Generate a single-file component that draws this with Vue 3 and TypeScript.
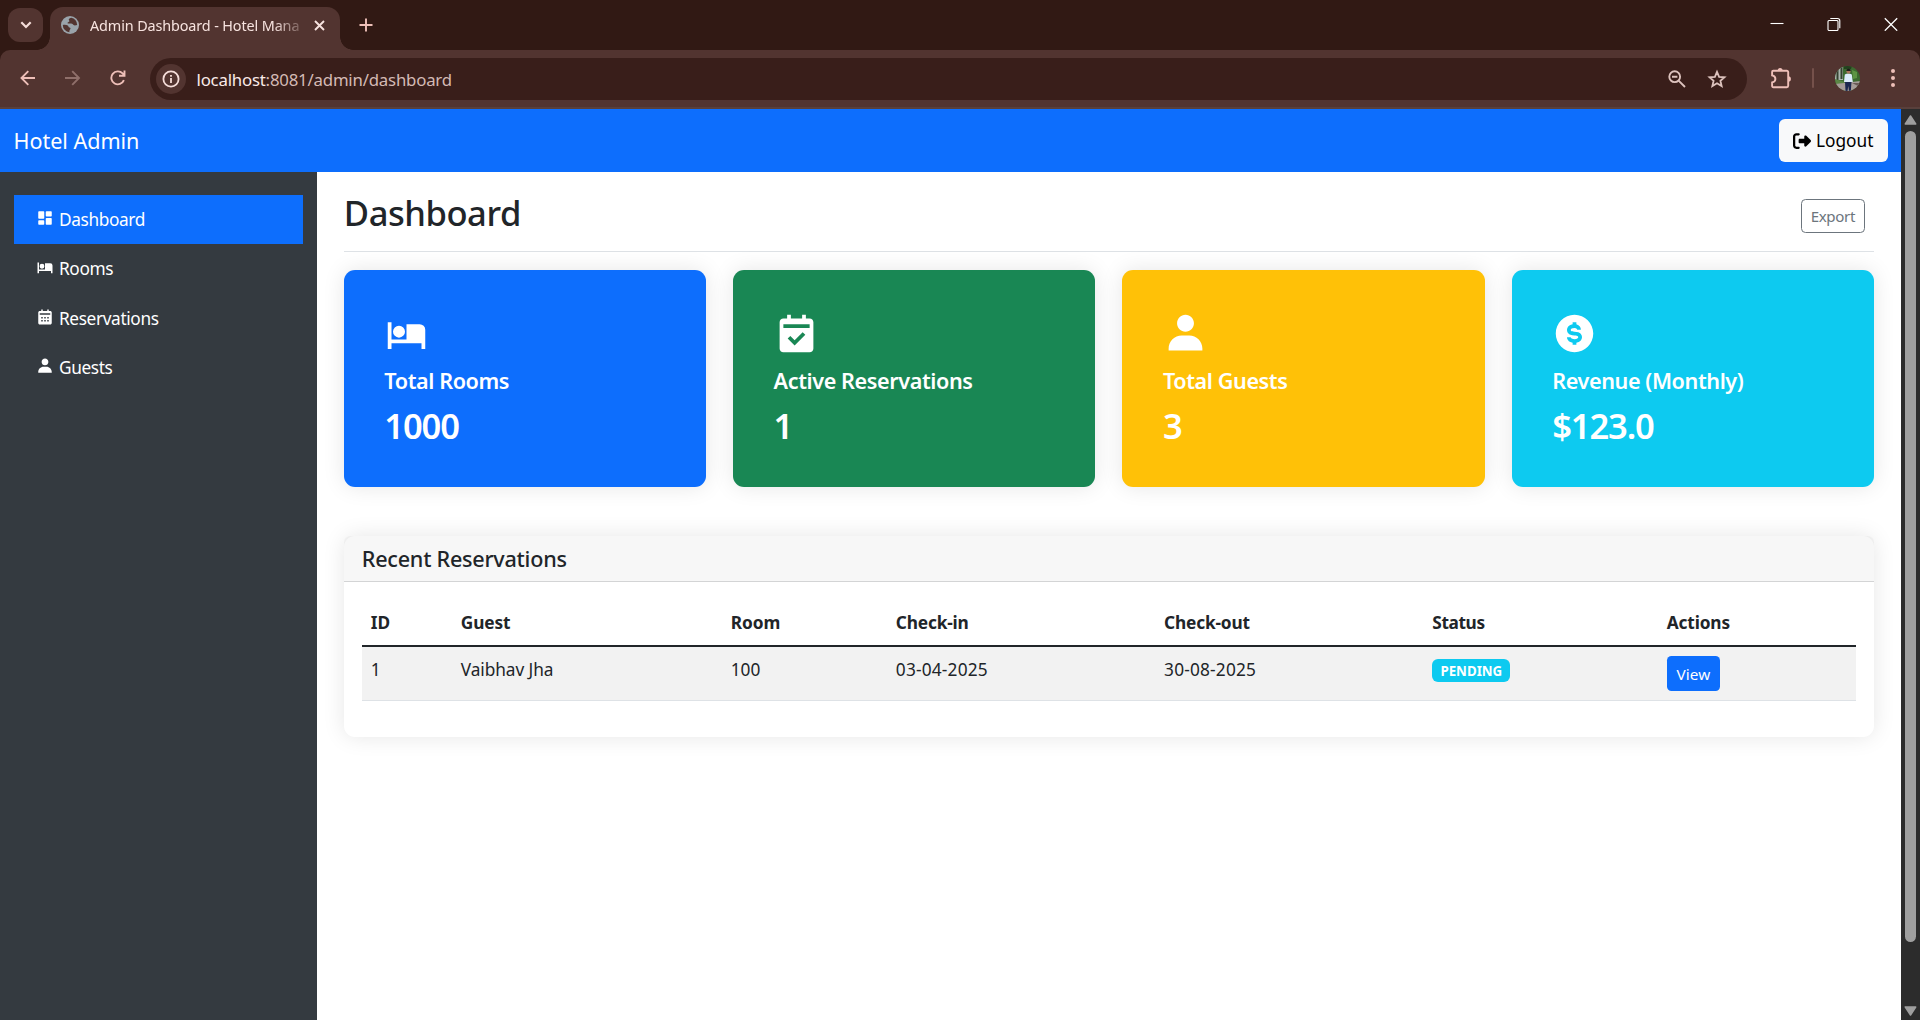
<script setup lang="ts">
interface NavItem {
  icon: string
  label: string
  active?: boolean
}

const icons: Record<string, string> = {
  dashboard:
    'M4 13h6a1 1 0 0 0 1-1V4a1 1 0 0 0-1-1H4a1 1 0 0 0-1 1v8a1 1 0 0 0 1 1zm-1 7a1 1 0 0 0 1 1h6a1 1 0 0 0 1-1v-4a1 1 0 0 0-1-1H4a1 1 0 0 0-1 1v4zm10 0a1 1 0 0 0 1 1h6a1 1 0 0 0 1-1v-7a1 1 0 0 0-1-1h-6a1 1 0 0 0-1 1v7zm1-10h6a1 1 0 0 0 1-1V4a1 1 0 0 0-1-1h-6a1 1 0 0 0-1 1v5a1 1 0 0 0 1 1z',
  bed:
    'M2 6h2v9.2h8V7h7a3 3 0 0 1 3 3v10.2h-2v-3H4v3H2zM4.8 11a3.2 3.2 0 1 0 6.4 0a3.2 3.2 0 1 0-6.4 0z',
  calendar:
    'M19 4h-2V2h-2v2H9V2H7v2H5c-1.103 0-2 .897-2 2v14c0 1.103.897 2 2 2h14c1.103 0 2-.897 2-2V6c0-1.103-.897-2-2-2zM9 18H7v-2h2v2zm0-4H7v-2h2v2zm4 4h-2v-2h2v2zm0-4h-2v-2h2v2zm4 4h-2v-2h2v2zm0-4h-2v-2h2v2zm2-5H5V7h14v2z',
  calendarCheck:
    'M19 4h-2V2h-2v2H9V2H7v2H5c-1.103 0-2 .897-2 2v14c0 1.103.897 2 2 2h14c1.103 0 2-.897 2-2V6c0-1.103-.897-2-2-2zm-8 14.414-3.707-3.707 1.414-1.414L11 15.586l4.293-4.293 1.414 1.414L11 18.414zM19 9H5V7h14v2z',
  user:
    'M7.5 6.5C7.5 8.981 9.519 11 12 11s4.5-2.019 4.5-4.5S14.481 2 12 2 7.5 4.019 7.5 6.5zM20 21h1v-1c0-3.859-3.141-7-7-7h-4c-3.86 0-7 3.141-7 7v1h17z',
  dollar:
    'M12 2C6.486 2 2 6.486 2 12s4.486 10 10 10 10-4.486 10-10S17.514 2 12 2zm1 14.915V18h-2v-1.08c-2.339-.367-3-2.002-3-2.92h2c.011.143.159 1 2 1 1.38 0 2-.585 2-1 0-.324 0-1-2-1-3.48 0-4-1.88-4-3 0-1.288 1.029-2.584 3-2.915V6.012h2v1.109c1.734.41 2.4 1.853 2.4 2.879h-1l-1 .018C13.386 9.638 13.185 9 12 9c-1.299 0-2 .516-2 1 0 .374 0 1 2 1 3.48 0 4 1.88 4 3 0 1.288-1.029 2.584-3 2.915z',
}

const nav: NavItem[] = [
  { icon: 'dashboard', label: 'Dashboard', active: true },
  { icon: 'bed', label: 'Rooms' },
  { icon: 'calendar', label: 'Reservations' },
  { icon: 'user', label: 'Guests' },
]

const stats = [
  { tone: 'primary', icon: 'bed', label: 'Total Rooms', value: '1000' },
  { tone: 'success', icon: 'calendarCheck', label: 'Active Reservations', value: '1' },
  { tone: 'warning', icon: 'user', label: 'Total Guests', value: '3' },
  { tone: 'cyan', icon: 'dollar', label: 'Revenue (Monthly)', value: '$123.0' },
]

const reservations = [
  { id: 1, guest: 'Vaibhav Jha', room: 100, checkIn: '03-04-2025', checkOut: '30-08-2025', status: 'PENDING' },
]
</script>

<template>
  <div class="window">
    <div class="tabstrip">
      <button class="tab-search" aria-label="Search tabs">
        <svg width="12" height="8" viewBox="0 0 12 8"><path d="M1.3 1.3 6 6l4.7-4.7" fill="none" stroke="#f5ddd9" stroke-width="2.2" /></svg>
      </button>
      <div class="tab">
        <svg width="18" height="18" viewBox="0 0 18 18">
          <circle cx="9" cy="9" r="9" fill="#9aa3aa" />
          <path d="M10.2 1.7C8 2.3 7.3 3.3 8 4.3c.8.9.3 1.6-.8 1.9-1 .3-.7 1.400.2 1.400h2.800c1.300 0 1.600 1 2.400 1.500.9.500 2 .3 3.600-.1a7.200 7.200 0 0 0-6-7.300z" fill="#523430" />
          <path d="M1.800 8.900c1.900-.4 3.900-.2 5 .7.9.8.5 1.700 1.700 2 1 .2 1.400.9.700 1.700-.7.9-.9 1.700-.8 2.900a7.300 7.300 0 0 1-6.600-7.300z" fill="#523430" />
        </svg>
        <span class="tab-title">Admin Dashboard - Hotel Mana</span>
        <svg class="tab-close" width="11" height="11" viewBox="0 0 11 11"><path d="m1 1 9 9M10 1l-9 9" stroke="#f7e3df" stroke-width="1.9" /></svg>
      </div>
      <svg class="new-tab" width="14" height="14" viewBox="0 0 14 14"><path d="M7 .5v13M.5 7h13" stroke="#eebfb8" stroke-width="1.9" /></svg>
      <div class="controls">
        <svg width="14" height="14" viewBox="0 0 14 14"><path d="M.5 6.500h13" stroke="#fff" stroke-width="1.1" /></svg>
        <svg width="14" height="14" viewBox="0 0 14 14" fill="none" stroke="#fff" stroke-width="1.1"><rect x="1" y="3.500" width="10" height="10" rx="1" /><path d="M3.300 1.500h7.200a2.300 2.300 0 0 1 2.300 2.300v7.400" /></svg>
        <svg width="14" height="14" viewBox="0 0 14 14"><path d="m.8 1.300 12.400 12.400M13.200 1.300.8 13.700" stroke="#fff" stroke-width="1.3" /></svg>
      </div>
    </div>

    <div class="toolbar">
      <div class="nav-icons">
        <svg width="16" height="16" viewBox="0 0 16 16"><path d="M15 8H2M8.300 1.200 1.500 8l6.800 6.800" fill="none" stroke="#eebfb8" stroke-width="1.9" /></svg>
        <svg width="16" height="16" viewBox="0 0 16 16"><path d="M0 8H13.500M7.200 1.200 14 8l-6.800 6.800" fill="none" stroke="#8f6f6a" stroke-width="1.9" /></svg>
        <svg width="17" height="16" viewBox="0 0 17 16"><path d="M13.900 10.200A6.500 6.500 0 1 1 12.600 3.400L14.300 5.200M14.500.5v5.200H9" fill="none" stroke="#eebfb8" stroke-width="1.9" /></svg>
      </div>
      <div class="omnibox">
        <span class="site-info">
          <svg width="18" height="18" viewBox="0 0 18 18"><circle cx="9" cy="9" r="7.600" fill="none" stroke="#f5ddd9" stroke-width="1.8" /><path d="M9 8v5M9 5v1.700" stroke="#f5ddd9" stroke-width="1.8" /></svg>
        </span>
        <span class="url"><b>localhost</b>:8081/admin/dashboard</span>
        <svg class="zoom" width="18" height="18" viewBox="0 0 18 18" fill="none" stroke="#dcc2bd" stroke-width="1.9"><circle cx="6.700" cy="6.700" r="5.400" /><path d="M10.600 10.600 17 17M4 6.700h5.400" /></svg>
        <svg class="star" width="20" height="20" viewBox="0 0 20 20"><path d="m10 2.800 2.100 5 5.400.450-4.100 3.550 1.250 5.300L10 14.300l-4.650 2.800 1.250-5.300L2.500 8.250l5.400-.450z" fill="none" stroke="#dcc2bd" stroke-width="1.8" /></svg>
      </div>
      <svg class="puzzle" width="22" height="22" viewBox="0 0 22 22"><path d="M3.300 3.600h16M3.500 3.600h13.300a1.500 1.500 0 0 1 1.500 1.500v13.600a1.500 1.500 0 0 1-1.500 1.500H3.500a1.500 1.500 0 0 1-1.500-1.500v-3.400c4.300-.8 4.300-6.200 0-7V5.100a1.500 1.500 0 0 1 1.500-1.500z" fill="none" stroke="none" /><path d="M3.300 3.700h13.500a1.400 1.400 0 0 1 1.400 1.400v13.700a1.400 1.400 0 0 1-1.400 1.400H3.300a1.200 1.200 0 0 1-1.200-1.200v-3.600c4.400-1 4.400-6 0-7V4.900a1.200 1.200 0 0 1 1.200-1.200z" fill="none" stroke="#eebfb8" stroke-width="1.9" /><path d="M7.600 3.500a2.500 2.500 0 0 1 5 0zM18.300 9.300a2.600 2.600 0 0 1 0 5.200z" fill="#eebfb8" /></svg>
      <span class="divider"></span>
      <svg class="avatar" width="25" height="25" viewBox="0 0 25 25">
        <defs><clipPath id="face"><circle cx="12.5" cy="12.5" r="12.5" /></clipPath></defs>
        <g clip-path="url(#face)">
          <path d="M0 0h25v25H0z" fill="#3c6a2f" />
          <path d="M0 0h8v14H0z" fill="#aab5ae" />
          <path d="M2.500 2v12M6.500 0v13" stroke="#34402f" stroke-width="2" />
          <path d="M17 4l5 2v6l-4 1z" fill="#5d9443" />
          <path d="M9 0h8l-1 3H9z" fill="#24401f" />
          <path d="M0 13l10 3-2 3-8-1z" fill="#5b8746" />
          <path d="M0 18l9-1 16-2v10H0z" fill="#a69c98" />
          <path d="M17 17l8 4v-4z" fill="#6b5b57" />
          <path d="M9.800 8.500q3.500-2 7 0l1 7.500H9z" fill="#dcebfa" />
          <path d="M10 16h6.500l-.7 9H14l-.7-5-.8 5h-2z" fill="#1c2850" />
          <circle cx="13.500" cy="5.600" r="2.100" fill="#a8735c" />
          <path d="M11.300 5a2.200 2.200 0 0 1 4.400 0z" fill="#1d1a1b" />
        </g>
      </svg>
      <svg class="dots" width="4" height="18" viewBox="0 0 4 18" fill="#eebfb8"><circle cx="2" cy="2" r="2" /><circle cx="2" cy="9" r="2" /><circle cx="2" cy="16" r="2" /></svg>
    </div>

    <div class="viewport">
      <div class="page">
        <header class="navbar">
          <span class="brand">Hotel Admin</span>
          <button class="logout">
            <svg width="18" height="18" viewBox="0 0 512 512"><path d="M377.9 105.9 500.7 228.7c7.2 7.2 11.3 17.1 11.3 27.3s-4.1 20.1-11.3 27.3L377.9 406.1c-6.4 6.4-15 9.9-24 9.9-18.7 0-33.9-15.2-33.9-33.9V320H192c-17.7 0-32-14.3-32-32v-64c0-17.7 14.3-32 32-32h128v-62.100c0-18.700 15.200-33.900 33.900-33.900 9 0 17.600 3.600 24 9.900zM160 96H96c-17.700 0-32 14.300-32 32v256c0 17.700 14.300 32 32 32h64c17.700 0 32 14.300 32 32s-14.300 32-32 32H96c-53 0-96-43-96-96V128c0-53 43-96 96-96h64c17.700 0 32 14.300 32 32s-14.300 32-32 32z" /></svg>
            <span>Logout</span>
          </button>
        </header>
        <div class="body">
          <nav class="sidebar">
            <a v-for="n in nav" :key="n.label" class="nav-link" :class="{ active: n.active }">
              <svg width="18" height="18" viewBox="0 0 24 24" fill="currentColor"><path :d="icons[n.icon]" fill-rule="evenodd" /></svg>
              <span>{{ n.label }}</span>
            </a>
          </nav>
          <main class="content">
            <div class="title-row">
              <h2>Dashboard</h2>
              <button class="export"><span>Export</span></button>
            </div>
            <section class="stats">
              <article v-for="s in stats" :key="s.label" class="stat" :class="s.tone">
                <svg width="45" height="45" viewBox="0 0 24 24" fill="#fff"><path :d="icons[s.icon]" fill-rule="evenodd" /></svg>
                <h5>{{ s.label }}</h5>
                <h3>{{ s.value }}</h3>
              </article>
            </section>
            <section class="card">
              <div class="card-header"><h5>Recent Reservations</h5></div>
              <div class="card-body">
                <table>
                  <colgroup>
                    <col class="c-id" /><col class="c-guest" /><col class="c-room" /><col class="c-date" /><col class="c-date" /><col class="c-status" /><col />
                  </colgroup>
                  <thead>
                    <tr><th class="id">ID</th><th>Guest</th><th class="room">Room</th><th>Check-in</th><th>Check-out</th><th class="status">Status</th><th>Actions</th></tr>
                  </thead>
                  <tbody>
                    <tr v-for="r in reservations" :key="r.id">
                      <td>{{ r.id }}</td>
                      <td>{{ r.guest }}</td>
                      <td>{{ r.room }}</td>
                      <td class="date">{{ r.checkIn }}</td>
                      <td class="date">{{ r.checkOut }}</td>
                      <td><span class="badge">{{ r.status }}</span></td>
                      <td><button class="view">View</button></td>
                    </tr>
                  </tbody>
                </table>
              </div>
            </section>
          </main>
        </div>
      </div>
      <div class="scrollbar">
        <svg width="13" height="10" viewBox="0 0 13 10"><path d="M6.500 1 11.700 9H1.300z" fill="#9f9f9f" stroke="#9f9f9f" stroke-width="1.5" stroke-linejoin="round" /></svg>
        <div class="thumb"></div>
        <svg width="13" height="10" viewBox="0 0 13 10"><path d="M6.500 9 1.300 1h10.400z" fill="#9f9f9f" stroke="#9f9f9f" stroke-width="1.5" stroke-linejoin="round" /></svg>
      </div>
    </div>
  </div>
</template>

<style>
body {
  margin: 0;
  overflow: hidden;
}
</style>

<style scoped>
* {
  box-sizing: border-box;
}
.window {
  display: flex;
  flex-direction: column;
  width: 1920px;
  height: 1020px;
  background: #311914;
  font-family: 'Noto Sans', 'Open Sans', sans-serif;
  font-size: 17.28px;
  line-height: 27px;
  color: #212529;
  overflow: hidden;
}
svg {
  display: block;
  flex: none;
}
button {
  font: inherit;
  margin: 0;
}

.tabstrip {
  display: flex;
  height: 50px;
  flex: none;
}
.tab-search {
  display: flex;
  align-items: center;
  justify-content: center;
  width: 35px;
  height: 34px;
  margin: 8px 7px 0 8px;
  padding: 0;
  border: 0;
  border-radius: 12px;
  background: #523430;
}
.tab {
  position: relative;
  display: flex;
  align-items: center;
  width: 290px;
  height: 43px;
  margin-top: 7px;
  padding: 0 15px 7px 11px;
  border-radius: 13px 13px 0 0;
  background: #523430;
}
.tab::before,
.tab::after {
  content: '';
  position: absolute;
  bottom: 0;
  width: 13px;
  height: 13px;
}
.tab::before {
  left: -13px;
  background: radial-gradient(circle at 0 0, transparent 12.5px, #523430 13px);
}
.tab::after {
  right: -13px;
  background: radial-gradient(circle at 100% 0, transparent 12.5px, #523430 13px);
}
.tab-title {
  flex: none;
  width: 213px;
  margin-left: 11px;
  white-space: nowrap;
  font-size: 14.4px;
  letter-spacing: -0.12px;
  color: #f7e3df;
  -webkit-mask-image: linear-gradient(90deg, #000 86%, rgba(0, 0, 0, 0.15));
  mask-image: linear-gradient(90deg, #000 86%, rgba(0, 0, 0, 0.15));
}
.tab-close {
  margin-left: auto;
}
.new-tab {
  margin: 18px 0 0 19px;
}
.controls {
  display: flex;
  gap: 43px;
  margin: 17px 22px 0 auto;
}

.toolbar {
  display: flex;
  align-items: center;
  height: 59px;
  flex: none;
  padding-bottom: 1px;
  border-bottom: 2px solid #59403c;
  border-radius: 10px 10px 0 0;
  background: #523430;
}
.nav-icons {
  display: flex;
  gap: 29px;
  width: 150px;
  padding-left: 20px;
}
.omnibox {
  display: flex;
  align-items: center;
  width: 1597px;
  height: 42px;
  margin-top: 2px;
  padding: 0 20px 0 6px;
  border-radius: 21px;
  background: #391e1a;
}
.site-info {
  display: flex;
  align-items: center;
  justify-content: center;
  width: 30px;
  height: 30px;
  border-radius: 50%;
  background: #523430;
}
.url {
  margin-left: 10.5px;
  font-size: 16.8px;
  letter-spacing: -0.2px;
  color: #d4bab5;
}
.url b {
  font-weight: 400;
  color: #fbebe8;
}
.zoom {
  margin-left: auto;
}
.star {
  margin-left: 21px;
}
.puzzle {
  margin-left: 23px;
}
.divider {
  width: 2px;
  height: 20px;
  margin-left: 20px;
  border-radius: 1px;
  background: #75514b;
}
.avatar {
  margin-left: 21px;
}
.dots {
  margin-left: 31px;
}

.viewport {
  display: flex;
  flex: 1;
  min-height: 0;
}
.page {
  display: flex;
  flex-direction: column;
  width: 1901px;
  background: #fff;
}
.navbar {
  display: flex;
  align-items: center;
  justify-content: space-between;
  height: 63px;
  flex: none;
  padding: 0 13px 0 13.5px;
  background: #0d6efd;
}
.brand {
  font-size: 21.6px;
  letter-spacing: -0.05px;
  color: #fff;
}
.logout {
  display: flex;
  align-items: center;
  gap: 5px;
  width: 109px;
  height: 43px;
  padding: 0 0 0 14px;
  border: 0;
  border-radius: 6px;
  background: #f8f9fa;
  color: #000;
}
.body {
  display: flex;
  flex: 1;
}
.sidebar {
  width: 316.83px;
  padding: 23px 14px 0;
  background: #343a40;
}
.nav-link {
  display: flex;
  align-items: center;
  gap: 5px;
  height: 49.3px;
  padding-left: 22px;
  color: #fff;
  letter-spacing: -0.38px;
}
.nav-link svg {
  margin-top: -3px;
}
.nav-link.active {
  background: #0d6efd;
}

.content {
  flex: 1;
  padding: 0 27px;
}
.title-row {
  display: flex;
  align-items: center;
  justify-content: space-between;
  height: 80px;
  padding: 8px 9px 0 0;
  border-bottom: 1px solid #dee2e6;
}
h2,
h3,
h5 {
  margin: 0;
  font-weight: 500;
}
h2 {
  margin-top: -6px;
  font-size: 34.56px;
  line-height: 43px;
  letter-spacing: -0.45px;
}
.export {
  height: 34px;
  padding: 1px 9px 0;
  border: 1px solid #6c757d;
  border-radius: 4.5px;
  background: #fff;
  color: #6c757d;
  font-size: 15.1px;
  letter-spacing: -0.35px;
}
.stats {
  display: grid;
  grid-template-columns: repeat(4, 1fr);
  gap: 27px;
  margin-top: 18px;
}
.stat {
  height: 217px;
  padding: 40.5px;
  border-radius: 11px;
  box-shadow: 0 0 22px rgba(0, 0, 0, 0.1);
  color: #fff;
}
.stat h5 {
  margin-top: 11px;
  font-size: 21.6px;
  font-weight: 600;
  line-height: 27px;
  letter-spacing: -0.4px;
}
.stat h3 {
  margin-top: 10px;
  font-size: 34.56px;
  font-weight: 600;
  line-height: 43px;
  letter-spacing: -1.15px;
}
.primary {
  background: #0d6efd;
}
.success {
  background: #198754;
}
.warning {
  background: #ffc107;
}
.cyan {
  background: #0dcaf0;
}

.card {
  margin-top: 49px;
  border-radius: 11px;
  background: #fff;
  box-shadow: 0 0 22px rgba(0, 0, 0, 0.1);
}
.card-header {
  height: 46px;
  padding: 9px 18px;
  border-bottom: 1px solid #d3d4d5;
  border-radius: 6px 6px 0 0;
  background: rgba(0, 0, 0, 0.03);
}
.card-header h5 {
  font-size: 21.6px;
  letter-spacing: -0.25px;
}
.card-body {
  padding: 18px 18px 36px;
}
table {
  width: 1494px;
  table-layout: fixed;
  border-collapse: separate;
  border-spacing: 0;
}
.c-id {
  width: 90px;
}
.c-guest {
  width: 270px;
}
.c-room {
  width: 165px;
}
.c-date {
  width: 268.25px;
}
.c-status {
  width: 234.5px;
}
th,
td {
  padding: 9px;
  text-align: left;
  vertical-align: top;
}
th {
  border-bottom: 2px solid #212529;
  font-weight: 700;
  letter-spacing: -0.16px;
}
th.room,
th.id {
  letter-spacing: -0.1px;
}
th.status {
  letter-spacing: -0.4px;
}
td {
  border-bottom: 1px solid #dee2e6;
  background: #f2f2f2;
  letter-spacing: -0.08px;
}
td.date {
  letter-spacing: 0.19px;
}
.badge {
  display: block;
  width: 78px;
  height: 23px;
  margin-top: 3px;
  border-radius: 6px;
  background: #0dcaf0;
  color: #fff;
  font-size: 13.3px;
  font-weight: 700;
  line-height: 24px;
  letter-spacing: 0;
  text-align: center;
}
.view {
  display: block;
  width: 53px;
  height: 35px;
  padding: 2px 0 0;
  border: 0;
  border-radius: 4.5px;
  background: #0d6efd;
  color: #fff;
  font-size: 15.3px;
  letter-spacing: 0.1px;
}

.scrollbar {
  display: flex;
  flex-direction: column;
  align-items: center;
  width: 19px;
  padding: 6px 0 4px;
  background: #2c2c2c;
}
.thumb {
  width: 11px;
  height: 811px;
  margin: 6px 0 auto;
  border-radius: 6px;
  background: #9f9f9f;
}
</style>
